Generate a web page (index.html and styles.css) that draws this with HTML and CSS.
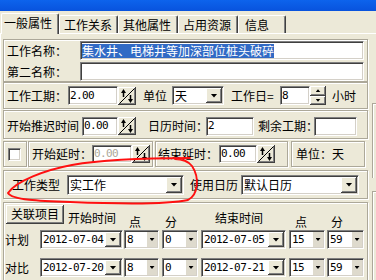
FILE: index.html
```html
<!DOCTYPE html>
<html lang="zh-CN">
  <head>
    <meta charset="UTF-8" />
    <meta name="viewport" content="width=device-width, initial-scale=1.0" />
    <title>工作属性</title>
    <link rel="stylesheet" href="styles.css">
  </head>
  <body>
    <svg class="defs" width="0" height="0">
      <defs>
        <symbol id="spin" viewBox="0 0 18 18">
          <rect x="0" y="0" width="18" height="18" fill="#404040" />
          <rect x="0" y="0" width="17" height="17" fill="#ffffff" />
          <rect x="1" y="1" width="16" height="16" fill="#808080" />
          <rect x="1" y="1" width="15" height="15" fill="#ece9d8" />
          <path d="M1.5 16.5 L16.5 1.5" stroke="#000" stroke-width="1" />
          <path d="M5.5 5 V10" stroke="#000" stroke-width="1.5" />
          <path d="M3 6 L5.5 2 L8 6 Z" fill="#000" />
          <path d="M12.5 8 V13" stroke="#000" stroke-width="1.5" />
          <path d="M10 12 L12.5 16 L15 12 Z" fill="#000" />
        </symbol>
      </defs>
    </svg>

    <div class="window">
      <div class="titlebar"></div>

      <div class="tabs">
        <div class="tab active">一般属性</div>
        <div class="tab t2">工作关系</div>
        <div class="tab t3">其他属性</div>
        <div class="tab t4">占用资源</div>
        <div class="tab t5">信息</div>
      </div>

      <div class="panel">
        <div class="main">
          <!-- 名称 -->
          <div class="group g-name">
            <div class="row">
              <span class="label lbl-name">工作名称：</span>
              <div class="field f-name"><span class="selected">集水井、电梯井等加深部位桩头破碎</span></div>
            </div>
            <div class="row">
              <span class="label lbl-name">第二名称：</span>
              <div class="field f-name"></div>
            </div>
          </div>

          <!-- 工期 -->
          <div class="group g-period">
            <span class="label lbl-period">工作工期：</span>
            <div class="field num f-period">2.00</div>
            <svg class="spin"><use href="#spin" /></svg>
            <span class="label lbl-unit">单位</span>
            <div class="combo c-unit">
              <span class="combo-text">天</span>
              <span class="dd-btn"><i class="tri"></i></span>
            </div>
            <span class="label lbl-workday">工作日=</span>
            <div class="field num f-hours">8</div>
            <div class="updown">
              <span class="ud-btn"><i class="tri-up"></i></span>
              <span class="ud-btn"><i class="tri-sm"></i></span>
            </div>
            <span class="label lbl-hour">小时</span>
          </div>

          <!-- 推迟 -->
          <div class="group g-delay">
            <span class="label lbl-delay">开始推迟时间</span>
            <div class="field num f-delay">0.00</div>
            <svg class="spin"><use href="#spin" /></svg>
            <span class="label lbl-calendar">日历时间：</span>
            <div class="field num f-calendar">2</div>
            <span class="label lbl-remain">剩余工期：</span>
            <div class="field f-remain"></div>
          </div>

          <!-- 延时 -->
          <div class="lag-row">
            <div class="group box-check">
              <span class="checkbox"></span>
            </div>
            <div class="group box-start">
              <span class="label lbl-lag">开始延时：</span>
              <div class="field num f-lag disabled">0.00</div>
              <svg class="spin"><use href="#spin" /></svg>
            </div>
            <div class="group box-end">
              <span class="label lbl-lag2">结束延时：</span>
              <div class="field num f-lag2">0.00</div>
              <svg class="spin"><use href="#spin" /></svg>
            </div>
            <div class="group box-unit">
              <span class="label lbl-unit2">单位：天</span>
            </div>
          </div>

          <!-- 类型 -->
          <div class="group g-type">
            <span class="label lbl-type">工作类型</span>
            <div class="combo c-type">
              <span class="combo-text">实工作</span>
              <span class="dd-btn"><i class="tri"></i></span>
            </div>
            <span class="label lbl-cal">使用日历</span>
            <div class="combo c-cal">
              <span class="combo-text">默认日历</span>
              <span class="dd-btn"><i class="tri"></i></span>
            </div>
          </div>

          <!-- 时间 -->
          <div class="group g-link">
            <div class="link-head">
              <span class="btn-link">关联项目</span>
              <span class="label hd-start">开始时间</span>
              <span class="label hd-pt">点</span>
              <span class="label hd-min">分</span>
              <span class="label hd-end">结束时间</span>
              <span class="label hd-pt2">点</span>
              <span class="label hd-min">分</span>
            </div>
            <div class="time-row first">
              <span class="label lbl-row">计划</span>
              <div class="combo date">
                <span class="combo-text num">2012-07-04</span>
                <span class="dd-btn"><i class="tri"></i></span>
              </div>
              <div class="combo mini hr">
                <span class="combo-text num">8</span>
                <span class="mini-btn"><i class="tri-sm"></i></span>
              </div>
              <div class="combo mini mn">
                <span class="combo-text num">0</span>
                <span class="mini-btn"><i class="tri-sm"></i></span>
              </div>
              <div class="combo date date2">
                <span class="combo-text num">2012-07-05</span>
                <span class="dd-btn"><i class="tri"></i></span>
              </div>
              <div class="combo mini hr2">
                <span class="combo-text num">15</span>
                <span class="mini-btn"><i class="tri-sm"></i></span>
              </div>
              <div class="combo mini mn2">
                <span class="combo-text num">59</span>
                <span class="mini-btn"><i class="tri-sm"></i></span>
              </div>
            </div>
            <div class="time-row second">
              <span class="label lbl-row">对比</span>
              <div class="combo date">
                <span class="combo-text num">2012-07-20</span>
                <span class="dd-btn"><i class="tri"></i></span>
              </div>
              <div class="combo mini hr">
                <span class="combo-text num">8</span>
                <span class="mini-btn"><i class="tri-sm"></i></span>
              </div>
              <div class="combo mini mn">
                <span class="combo-text num">0</span>
                <span class="mini-btn"><i class="tri-sm"></i></span>
              </div>
              <div class="combo date date2">
                <span class="combo-text num">2012-07-21</span>
                <span class="dd-btn"><i class="tri"></i></span>
              </div>
              <div class="combo mini hr2">
                <span class="combo-text num">15</span>
                <span class="mini-btn"><i class="tri-sm"></i></span>
              </div>
              <div class="combo mini mn2">
                <span class="combo-text num">59</span>
                <span class="mini-btn"><i class="tri-sm"></i></span>
              </div>
            </div>
          </div>
        </div>

        <div class="side">
          <div class="side-box upper"></div>
          <div class="side-box lower"></div>
        </div>
      </div>

      <svg class="mark" width="376" height="280" viewBox="0 0 376 280">
        <path d="M190 158 C150 158, 100 160, 72 165 C45 170, 16 181, 8 193 C12 200, 40 201, 70 202 C120 204, 170 204, 188 200 C198 195, 200 178, 192 166 C188 161, 182 159, 175 159" fill="none" stroke="#ff1010" stroke-width="1.9" stroke-linecap="round" />
      </svg>
    </div>
  </body>
</html>
```

FILE: styles.css
```css
body {
  margin: 0;
  padding: 0;
  background-color: #ece9d8;
  font-family: "Noto Sans CJK SC", sans-serif;
  font-size: 12px;
  color: #000;
}

.defs {
  position: absolute;
  width: 0;
  height: 0;
}

.window {
  position: relative;
  width: 376px;
  height: 280px;
  overflow: hidden;
}

.titlebar {
  height: 11px;
  background: linear-gradient(#0d63ec, #0853dd);
}

/* tabs */

.tabs {
  display: flex;
  align-items: flex-end;
  height: 22px;
}

.tab {
  box-sizing: border-box;
  flex: none;
  height: 18px;
  padding: 3px 0 0 4px;
  line-height: 12px;
  white-space: nowrap;
  border-top: 1px solid #fff;
  border-left: 1px solid #fff;
  border-right: 1px solid #404040;
  box-shadow: inset -1px 0 #808080;
  border-radius: 2px 2px 0 0;
}

.tab.active {
  position: relative;
  z-index: 1;
  width: 58px;
  height: 21px;
  margin-left: 1px;
  margin-bottom: -1px;
  padding-left: 2px;
  background-color: #ece9d8;
}

.tab.t2 { width: 59px; }
.tab.t3 { width: 60px; }
.tab.t4 { width: 60px; }
.tab.t5 { width: 48px; padding-left: 6px; }

/* panel */

.panel {
  display: flex;
  height: 250px;
  border-top: 1px solid #fff;
  border-left: 1px solid #fff;
}

.main {
  flex: none;
  width: 365px;
  margin-left: 2px;
}

.group {
  box-sizing: border-box;
  display: flex;
  align-items: center;
  border: 1px solid #aca899;
  box-shadow: inset 1px 1px #fff, 1px 1px #fff;
}

.group > *,
.row > *,
.time-row > *,
.link-head > * {
  flex: none;
}

.label {
  line-height: 12px;
  white-space: nowrap;
}

.num {
  font-family: "DejaVu Sans Mono", monospace;
  font-size: 11px;
  letter-spacing: -0.6px;
}

.field {
  box-sizing: border-box;
  display: flex;
  align-items: center;
  height: 19px;
  background-color: #fff;
  border: 1px solid;
  border-color: #808080 #fff #fff #808080;
  box-shadow: inset 1px 1px #404040, inset -1px -1px #d4d0c8;
  padding-left: 1px;
  line-height: 12px;
  overflow: hidden;
  white-space: nowrap;
}

.field.disabled {
  color: #aca899;
}

.selected {
  display: inline-block;
  height: 14px;
  line-height: 14px;
  background-color: #316ac5;
  color: #fff;
}

.spin {
  width: 18px;
  height: 18px;
}

.combo {
  box-sizing: border-box;
  display: flex;
  align-items: stretch;
  height: 19px;
  background-color: #fff;
  border: 1px solid;
  border-color: #808080 #fff #fff #808080;
  box-shadow: inset 1px 1px #404040, inset -1px -1px #d4d0c8;
  padding: 1px;
}

.combo-text {
  flex: 1;
  display: flex;
  align-items: center;
  padding-left: 1px;
  line-height: 12px;
  white-space: nowrap;
}

.dd-btn {
  flex: none;
  display: flex;
  align-items: center;
  justify-content: center;
  width: 16px;
  background-color: #ece9d8;
  box-shadow: inset -1px -1px #404040, inset 1px 1px #fff, inset -2px -2px #808080;
}

.mini-btn {
  flex: none;
  display: flex;
  align-items: center;
  justify-content: center;
  width: 10px;
  background-color: #dedacd;
}

.tri {
  width: 7px;
  height: 4px;
  background-color: #000;
  clip-path: polygon(0 0, 100% 0, 50% 100%);
}

.tri-sm {
  width: 5px;
  height: 3px;
  background-color: #000;
  clip-path: polygon(0 0, 100% 0, 50% 100%);
}

.tri-up {
  width: 5px;
  height: 3px;
  background-color: #000;
  clip-path: polygon(50% 0, 100% 100%, 0 100%);
}

.updown {
  display: flex;
  flex-direction: column;
  width: 16px;
  height: 19px;
}

.ud-btn {
  flex: 1;
  display: flex;
  align-items: center;
  justify-content: center;
  background-color: #ece9d8;
  box-shadow: inset -1px -1px #404040, inset 1px 1px #fff, inset -2px -2px #808080;
}

.checkbox {
  box-sizing: border-box;
  width: 13px;
  height: 13px;
  margin-left: 4px;
  background-color: #fff;
  border: 1px solid;
  border-color: #808080 #fff #fff #808080;
  box-shadow: inset 1px 1px #404040, inset -1px -1px #d4d0c8;
}

/* 名称 */

.g-name {
  flex-direction: column;
  align-items: stretch;
  gap: 2px;
  height: 43px;
  margin-top: 5px;
  padding-top: 1px;
}

.row {
  display: flex;
  align-items: center;
  height: 19px;
}

.lbl-name { margin-left: 3px; width: 73px; }
.f-name { width: 284px; padding-left: 1px; }

/* 工期 */

.g-period { height: 27px; }

.lbl-period { margin-left: 3px; width: 61px; }
.f-period { width: 50px; }
.lbl-unit { margin-left: 7px; width: 24px; }
.c-unit { margin-left: 5px; width: 52px; }
.lbl-workday { margin-left: 7px; width: 49px; }
.f-hours { width: 30px; }
.lbl-hour { margin-left: 6px; }

/* 推迟 */

.g-delay {
  height: 29px;
  margin-top: 1px;
  padding-top: 3px;
}

.lbl-delay { margin-left: 3px; width: 75px; }
.f-delay { width: 36px; }
.lbl-calendar { margin-left: 12px; width: 58px; }
.f-calendar { width: 48px; }
.lbl-remain { margin-left: 4px; width: 56px; }
.f-remain { width: 43px; }

/* 延时 */

.lag-row {
  display: flex;
  height: 26px;
  margin-top: 2px;
}

.lag-row .group { height: 26px; }

.box-check { width: 24px; }
.box-start { width: 125px; margin-left: 1px; }
.box-end { width: 133px; margin-left: 2px; }
.box-unit { width: 74px; margin-left: 3px; }

.lbl-lag { margin-left: 3px; width: 60px; }
.f-lag { width: 40px; height: 18px; }
.lbl-lag2 { margin-left: 2px; width: 61px; }
.f-lag2 { width: 38px; height: 18px; }
.lbl-unit2 { margin-left: 4px; }

/* 类型 */

.g-type {
  height: 29px;
  margin-top: 3px;
}

.g-type .combo { height: 20px; }

.lbl-type { margin-left: 8px; width: 55px; }
.c-type { width: 117px; }
.lbl-cal { margin-left: 6px; width: 51px; }
.c-cal { width: 118px; }

/* 时间 */

.g-link {
  flex-direction: column;
  align-items: stretch;
  height: 90px;
  margin-top: 3px;
  padding-top: 1px;
}

.link-head {
  display: flex;
  align-items: flex-start;
  height: 24px;
}

.btn-link {
  box-sizing: border-box;
  width: 58px;
  height: 19px;
  margin-left: 2px;
  margin-top: 1px;
  padding-top: 3px;
  line-height: 12px;
  text-align: center;
  background-color: #ece9d8;
  box-shadow: inset -1px -1px #404040, inset 1px 1px #fff, inset -2px -2px #808080;
}

.hd-start { margin-left: 4px; margin-top: 8px; width: 48px; }
.hd-pt { margin-left: 13px; margin-top: 12px; }
.hd-min { margin-left: 24px; margin-top: 12px; }
.hd-end { margin-left: 38px; margin-top: 8px; width: 48px; }
.hd-pt2 { margin-left: 32px; margin-top: 12px; }

.time-row {
  display: flex;
  align-items: center;
  height: 19px;
}

.time-row.first { margin-top: 2px; }
.time-row.second { margin-top: 9px; }

.lbl-row { margin-left: 1px; width: 35px; }
.date { width: 83px; }
.hr { margin-left: 1px; width: 35px; }
.mn { margin-left: 3px; width: 36px; }
.date2 { margin-left: 3px; width: 85px; }
.hr2 { margin-left: 3px; width: 36px; }
.mn2 { margin-left: 2px; width: 37px; }

/* right edge */

.side {
  flex: 1;
  margin-left: 4px;
}

.side-box {
  border-top: 1px solid #aca899;
  border-left: 1px solid #aca899;
  box-shadow: inset 1px 1px #fff;
}

.side-box.upper {
  height: 74px;
  margin-top: 69px;
}

.side-box.lower {
  height: 100px;
  margin-top: 13px;
}

.mark {
  position: absolute;
  left: 0;
  top: 0;
  pointer-events: none;
}
```
